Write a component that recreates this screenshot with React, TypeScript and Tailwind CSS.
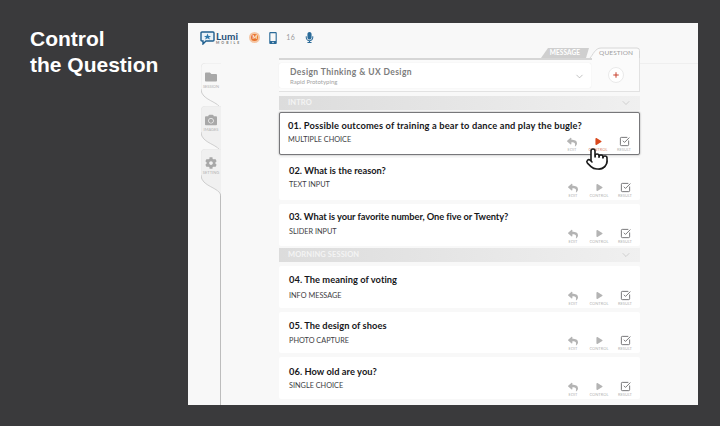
import { ChevronDown, Plus, Pointer, SquareCheckBig } from "lucide-react"
import { FaCamera, FaCog, FaFolder, FaMicrophone, FaMobileAlt, FaPlay, FaReply } from "react-icons/fa"

const gothic = { fontFamily: '"Lato", "Liberation Sans", sans-serif' }

const sections = [
    {
        name: "INTRO",
        mt: "mt-[4px]",
        questions: [
            { title: "01. Possible outcomes of training a bear to dance and play the bugle?", kind: "MULTIPLE CHOICE", active: true, box: "mt-[2px] h-[43px] pt-[7px]", spacing: "tracking-[0.15px]", kindGap: "mt-[3px]" },
            { title: "02. What is the reason?", kind: "TEXT INPUT", active: false, box: "mt-[3px] h-[42px] pt-[7px]", spacing: "tracking-[0px]", kindGap: "mt-[3px]" },
            { title: "03. What is your favorite number, One five or Twenty?", kind: "SLIDER INPUT", active: false, box: "mt-[4px] h-[42px] pt-[7px]", spacing: "tracking-[-0.08px]", kindGap: "mt-[4px]" },
        ],
    },
    {
        name: "MORNING SESSION",
        mt: "mt-[2px]",
        questions: [
            { title: "04. The meaning of voting", kind: "INFO MESSAGE", active: false, box: "mt-[4px] h-[42px] pt-[8px]", spacing: "tracking-[0.05px]", kindGap: "mt-[5px]" },
            { title: "05. The design of shoes", kind: "PHOTO CAPTURE", active: false, box: "mt-[4px] h-[41px] pt-[8px]", spacing: "tracking-[0.05px]", kindGap: "mt-[4px]" },
            { title: "06. How old are you?", kind: "SINGLE CHOICE", active: false, box: "mt-[4px] h-[42px] pt-[9px]", spacing: "tracking-[0.05px]", kindGap: "mt-[3px]" },
        ],
    },
]

function Action({ label, active, children }: { label: string; active?: boolean; children: React.ReactNode }) {
    return (
        <div className={`flex w-[26px] flex-col items-center ${active ? "text-[#d9481c]" : "text-[#b4b4b4]"}`}>
            <div className="flex h-[11px] items-center">{children}</div>
            <span className={`text-[4px] leading-[5px] ${active ? "text-[#d98a6c]" : "text-[#b5b5b5]"}`}>{label}</span>
        </div>
    )
}

function QuestionCard({ title, kind, active, box, spacing, kindGap }: { title: string; kind: string; active: boolean; box: string; spacing: string; kindGap: string }) {
    return (
        <div className={`relative flex ${box} flex-col rounded-[2px] bg-white ${active ? "border border-[#77777a] pl-[8px] shadow-[0_0_2px_#9a9a9a]" : "pl-[10px]"}`}>
            <div className={`text-[9.3px] font-bold leading-[12px] ${spacing} text-[#17171a]`}>{title}</div>
            <div className={`${kindGap} text-[7.3px] leading-[10px] text-[#3d3d3f]`}>{kind}</div>
            <div className="absolute bottom-[2px] right-[2px] flex">
                <Action label="EDIT">
                    <FaReply size={10} />
                </Action>
                <Action label="CONTROL" active={active}>
                    <FaPlay size={7} />
                </Action>
                <Action label="RESULT">
                    <SquareCheckBig size={11} className="text-[#5c5c5f]" strokeWidth={1.8} />
                </Action>
            </div>
            {active && (
                <Pointer size={24} fill="#ffffff" strokeWidth={1.6} className="absolute left-[305px] top-[34px] z-10 text-[#1b1b1b]" />
            )}
        </div>
    )
}

function SectionBar({ name }: { name: string }) {
    return (
        <div className="flex h-[14px] items-center justify-between bg-gradient-to-r from-[#dcdcdc] to-[#f0f0f0] pl-[9px] pr-[8px]">
            <span className="text-[7.5px] font-bold tracking-[0.1px] text-[#f4f4f4]">{name}</span>
            <ChevronDown size={12} strokeWidth={1.2} className="text-[#b8b8b8]" />
        </div>
    )
}

function Tab({ label, active, children }: { label: string; active?: boolean; children: React.ReactNode }) {
    return (
        <div className="relative h-[47px] w-[20px]">
            <svg width="20" height="47" viewBox="0 0 20 47" className="absolute left-0 top-0">
                <path d="M0 5 Q0 0 5 0 L20 0 L20 47 C19 38 0 38 0 26 Z" fill={active ? "#f8f8f8" : "#f0f0f0"} />
                <path d="M20 0 L5 0 Q0 0 0 5 L0 26" fill="none" stroke="#e6e6e6" strokeWidth="0.8" />
                <path d="M0 26 C0 38 19 38 20 47" fill="none" stroke="#c4c4c4" strokeWidth="0.8" />
            </svg>
            <div className="relative flex flex-col items-center pt-[8px] text-[#a8a8a8]">
                {children}
                <span className="mt-[1px] text-[4px] leading-[5px] text-[#b0b0b0]">{label}</span>
            </div>
        </div>
    )
}

export default function App() {
    return (
        <div className="flex h-[426px] w-[720px] items-start overflow-hidden bg-[#3a3a3c]" style={gothic}>
            <h1
                className="w-[188px] pl-[30px] pt-[26px] text-[21px] font-bold leading-[25.500px] text-white"
                style={{ fontFamily: '"Liberation Sans", sans-serif' }}
            >
                Control
                <br />
                the Question
            </h1>

            <div className="mt-[23px] flex h-[382px] w-[510px] flex-col bg-[#f8f8f8]">
                <header className="flex h-[24px] shrink-0 items-center pl-[12px] pt-[5px]">
                    <svg width="15" height="14" viewBox="0 0 15 14">
                        <path d="M2 1 H13 Q14 1 14 2 V9 Q14 10 13 10 H6 L3 13 V10 H2 Q1 10 1 9 V2 Q1 1 2 1 Z" fill="#e9f2f8" stroke="#1f5f8f" strokeWidth="1.4" />
                        <path d="M7.500 2.500 L8.500 5 H11 L9 6.500 L10 8.500 L7.500 7.300 L5 8.500 L6 6.500 L4 5 H6.500 Z" fill="#2d78ab" />
                    </svg>
                    <div className="ml-[1px] flex flex-col items-start">
                        <span className="text-[10px] font-bold leading-[10px] tracking-[0.2px] text-[#1d4f78]">Lumi</span>
                        <span className="text-[3.500px] font-bold leading-[4px] tracking-[2px] text-[#777777]">MOBILE</span>
                    </div>
                    <div className="ml-[8px] flex h-[11px] w-[11px] items-center justify-center rounded-full border-2 border-[#f5c6a4] bg-[#e8742c] text-[5px] font-bold leading-none text-white">
                        M
                    </div>
                    <FaMobileAlt size={12} className="ml-[7px] text-[#2a6a98]" />
                    <span className="ml-[7px] text-[7px] tracking-[0.5px] text-[#9c9c9c]">16</span>
                    <FaMicrophone size={11} className="ml-[9px] text-[#2a6a98]" />
                </header>

                <div className="flex min-h-0 flex-1">
                    <aside className="flex w-[91px] shrink-0 pl-[13px] pt-[16px]">
                        <div className="relative flex w-[20px] flex-col">
                            <div className="absolute bottom-0 right-0 top-[47px] w-[1px] bg-[#bdbdbd]" />
                            <Tab label="SESSION" active>
                                <FaFolder size={12} />
                            </Tab>
                            <div className="-mt-[4px]">
                                <Tab label="IMAGES">
                                    <FaCamera size={12} />
                                </Tab>
                            </div>
                            <div className="-mt-[4px]">
                                <Tab label="SETTING">
                                    <FaCog size={12} />
                                </Tab>
                            </div>
                        </div>
                    </aside>

                    <main className="w-[361px] shrink-0">
                        <div className="relative flex h-[11px] justify-end">
                            <svg width="99" height="11" viewBox="0 0 99 11" className="absolute right-0 top-0">
                                <path d="M0 11 L7 1 H48 L45 11 Z" fill="#cfcfcf" />
                                <path d="M49 11 C52 8 54 1 60 1 H96 Q98.500 1 98.500 3.500 V11" fill="#fbfbfb" stroke="#d8d8d8" strokeWidth="1" />
                            </svg>
                            <span className="relative mr-[7px] text-[6.500px] font-bold leading-[11px] tracking-[0.1px] text-white">MESSAGE</span>
                            <span className="relative ml-[12px] mr-[7px] text-[6.500px] leading-[11px] tracking-[0.1px] text-[#a0a0a0]">QUESTION</span>
                        </div>
                        <div className="flex h-[34px] items-center border-r border-b border-[#e2e2e2] bg-[#fbfbfb]">
                            <div className="flex h-[34px] w-[313px] flex-col">
                                <div className="h-[2px] w-[313px] shrink-0 bg-[#d6d6d6]" />
                                <div className="mt-[3px] flex h-[25px] w-[312px] items-center justify-between rounded-[2px] bg-white pl-[11px] pr-[6px] pt-[2px] shadow-[0_0_1px_#dddddd]">
                                    <div>
                                        <div className="text-[8.500px] font-bold leading-[11px] tracking-[0.4px] text-[#7c7c7c]">Design Thinking &amp; UX Design</div>
                                        <div className="text-[6px] leading-[7px] text-[#a3a3a3]">Rapid Prototyping</div>
                                    </div>
                                    <ChevronDown size={11} strokeWidth={1.3} className="text-[#9a9a9a]" />
                                </div>
                            </div>
                            <div className="ml-[16px] flex h-[16px] w-[16px] items-center justify-center rounded-full border border-[#eaeaea] bg-white">
                                <Plus size={8} strokeWidth={3} className="text-[#c8402c]" />
                            </div>
                        </div>

                        <div className="flex flex-col">
                            {sections.map((section) => (
                                <div key={section.name} className={`flex flex-col ${section.mt}`}>
                                    <SectionBar name={section.name} />
                                    {section.questions.map((q) => (
                                        <QuestionCard key={q.title} {...q} />
                                    ))}
                                </div>
                            ))}
                        </div>
                    </main>
                    <div className="mt-[16px] h-[1px] flex-1 bg-[#efefef]" />
                </div>
            </div>
        </div>
    )
}
